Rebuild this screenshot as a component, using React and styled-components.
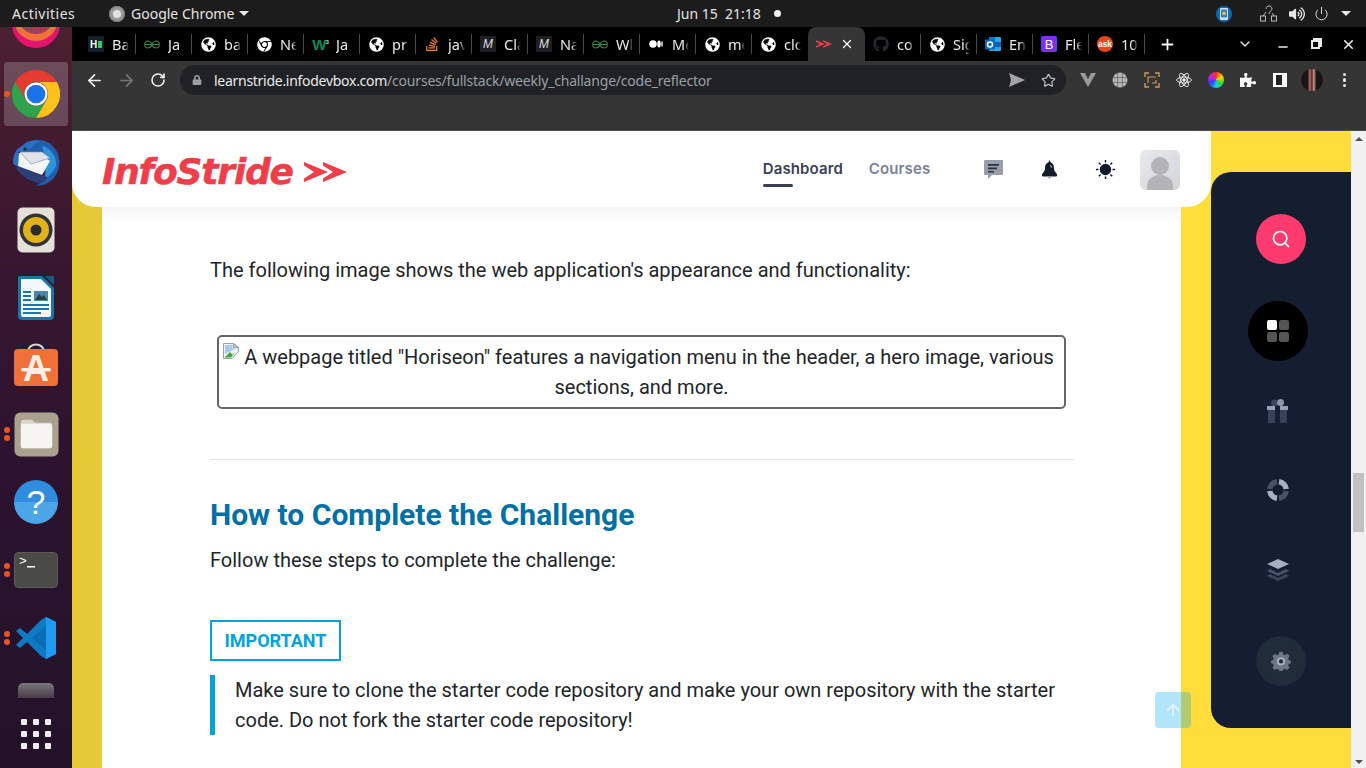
import styled, { createGlobalStyle } from 'styled-components'
import { ArrowLeft, ArrowRight, ArrowUp, RotateCw, Star, X, Plus, ChevronDown, Minus, Power, Search } from 'lucide-react'
import { FaGithub, FaStackOverflow, FaPuzzlePiece, FaGlobeAmericas, FaChrome, FaVolumeUp, FaLock } from 'react-icons/fa'

const GlobalStyle = createGlobalStyle`
  html, body {
    margin: 0;
    height: 100%;
    overflow: hidden;
    background: #1c1c1c;
  }
  * { box-sizing: border-box; }
`

const tabs = [
  { icon: 'hn', title: 'Ba' },
  { icon: 'gfg', title: 'Ja' },
  { icon: 'globe', title: 'ba' },
  { icon: 'chrome', title: 'Ne' },
  { icon: 'w3', title: 'Ja' },
  { icon: 'globe', title: 'pr' },
  { icon: 'so', title: 'jav' },
  { icon: 'medium', title: 'Cla' },
  { icon: 'medium', title: 'Na' },
  { icon: 'gfg', title: 'Wl' },
  { icon: 'dots', title: 'Me' },
  { icon: 'globe', title: 'me' },
  { icon: 'globe', title: 'clo', last: true },
  { icon: 'stride', active: true },
  { icon: 'github', title: 'co' },
  { icon: 'globe', title: 'Sig' },
  { icon: 'outlook', title: 'En' },
  { icon: 'bootstrap', title: 'Fle' },
  { icon: 'ask', title: '10' },
]

function Chevrons({ width = 16, color = '#ef3e4a' }) {
  return (
    <svg width={width} height={(width * 22) / 43} viewBox="0 0 43 22" fill={color}>
      <path d="M0 1L24 11L0 21V17.500L10 11L0 4.500Z" />
      <path d="M19 1L43 11L19 21V17.500L29 11L19 4.500Z" />
    </svg>
  )
}

function GfgIcon() {
  return (
    <svg width="16" height="9" viewBox="0 0 32 18" fill="none" stroke="#2f8d46" strokeWidth="2.200">
      <path d="M16 9C14 4 10 2 7 2 4 2 1.500 5 1.500 9s2.500 7 5.500 7c3 0 7-2 9-7zm0 0c2-5 6-7 9-7 3 0 5.500 3 5.500 7s-2.500 7-5.500 7c-3 0-7-2-9-7zM1.500 9h29" />
    </svg>
  )
}

function TabIcon({ name }) {
  if (name === 'globe') return <FaGlobeAmericas size={15} color="#fff" />
  if (name === 'chrome') return <FaChrome size={15} color="#fff" />
  if (name === 'so') return <FaStackOverflow size={16} color="#f48024" />
  if (name === 'github') return <FaGithub size={16} color="#24292f" />
  if (name === 'gfg') return <GfgIcon />
  if (name === 'stride') return <Chevrons />
  if (name === 'hn') return <HnBadge>H<i /></HnBadge>
  if (name === 'w3') return <W3Badge>W<sup>3</sup></W3Badge>
  if (name === 'medium') return <MediumBadge>M</MediumBadge>
  if (name === 'dots') {
    return (
      <svg width="14" height="8" viewBox="0 0 28 16" fill="#fff">
        <circle cx="8" cy="8" r="7.500" />
        <ellipse cx="20" cy="8" rx="3.500" ry="7" />
        <ellipse cx="26" cy="8" rx="1.500" ry="6" />
      </svg>
    )
  }
  if (name === 'outlook') {
    return (
      <svg width="16" height="16" viewBox="0 0 16 16">
        <rect x="4" y="1" width="12" height="14" rx="1" fill="#28a8ea" />
        <rect x="4" y="1" width="6" height="5" fill="#0078d4" />
        <rect x="10" y="6" width="6" height="5" fill="#0364b8" />
        <rect x="0" y="3.500" width="10" height="10" rx="1" fill="#0f6cbd" />
        <circle cx="5" cy="8.500" r="2.500" fill="none" stroke="#fff" strokeWidth="1.400" />
      </svg>
    )
  }
  if (name === 'bootstrap') return <BootstrapBadge>B</BootstrapBadge>
  if (name === 'ask') return <AskBadge>ask</AskBadge>
  return null
}

function ChromeLogo({ size = 48 }) {
  return (
    <svg width={size} height={size} viewBox="0 0 48 48">
      <path d="M3.200 12A24 24 0 0 1 44.800 12L24 12A12 12 0 0 0 13.600 30Z" fill="#e53b30" />
      <path d="M44.800 12A24 24 0 0 1 24 48L34.400 30A12 12 0 0 0 24 12Z" fill="#fcc11a" />
      <path d="M24 48A24 24 0 0 1 3.200 12L13.600 30A12 12 0 0 0 34.400 30Z" fill="#2fa24c" />
      <circle cx="24" cy="24" r="11.500" fill="#fff" />
      <circle cx="24" cy="24" r="9.300" fill="#1a73e8" />
    </svg>
  )
}

function Firefox() {
  return (
    <svg width="48" height="48" viewBox="0 0 48 48">
      <circle cx="24" cy="24" r="24" fill="#e2146e" />
      <circle cx="24" cy="19" r="22" fill="#f2703a" />
      <circle cx="24" cy="16" r="18" fill="#a63b55" />
      <circle cx="24" cy="14" r="12" fill="#5a2d72" />
    </svg>
  )
}

function Thunderbird() {
  return (
    <svg width="48" height="48" viewBox="0 0 48 48">
      <path d="M10 8C20-2 38 0 45 14c6 13 0 29-14 33l-8 1c9-4 11-10 9-17L6 22z" fill="#1f5fae" />
      <path d="M30 8c9 2 15 10 14 20-3 6-6 9-11 13 1-8 2-18-3-33z" fill="#2f93dc" />
      <path d="M1 24C1 16 5 10 10 8c6-6 14-6 19-4-5 0-8 3-9 6L6 14l10 10-8 5c-4-1-7-2-7-5z" fill="#2b6fc2" />
      <path d="M7 15l21 1 10 7-8 14-24-8z" fill="#f4f5f7" />
      <path d="M8 14l11 12 19-6-8-6z" fill="#dfe4ea" stroke="#8a97a8" strokeWidth=".7" />
      <path d="M4 30c5 8 14 14 24 15 5 0 7-4 7-6L6 28z" fill="#2c3f78" />
      <circle cx="13" cy="11" r="1.500" fill="#123" />
    </svg>
  )
}

function Rhythmbox() {
  return (
    <svg width="38" height="46" viewBox="0 0 38 46">
      <rect width="37" height="45" x=".5" y=".5" rx="5" fill="#e5e1d8" />
      <circle cx="19" cy="23" r="16.500" fill="#333" />
      <circle cx="19" cy="23" r="13" fill="#e0b21c" />
      <circle cx="19" cy="23" r="5.500" fill="#2b2b2b" />
    </svg>
  )
}

function Writer() {
  return (
    <svg width="38" height="46" viewBox="0 0 38 46">
      <path d="M3 1h22l12 12v28a4 4 0 0 1-4 4H5a4 4 0 0 1-4-4V3a2 2 0 0 1 2-2z" fill="#1a76a8" />
      <path d="M28 1h9v9z" fill="#145c85" />
      <path d="M4 4h20l10 10v26a2 2 0 0 1-2 2H6a2 2 0 0 1-2-2z" fill="#f4f7f9" />
      <rect x="17" y="16" width="14" height="10" fill="#4b87ad" />
      <path d="M18 25l4-6 3 3 2-2 3 5z" fill="#3a3a3a" />
      <g fill="#1a76a8">
        <rect x="6" y="16" width="8" height="2" />
        <rect x="6" y="20" width="8" height="2" />
        <rect x="6" y="24" width="8" height="2" />
        <rect x="6" y="29" width="26" height="2" />
        <rect x="6" y="33" width="26" height="2" />
        <rect x="6" y="37" width="18" height="2" />
      </g>
    </svg>
  )
}

function Software() {
  return (
    <svg width="46" height="46" viewBox="0 0 46 46">
      <path d="M15 9c0-10 16-10 16 0" fill="none" stroke="#e8d2b8" strokeWidth="2" />
      <rect x="1" y="6" width="44" height="37" rx="4" fill="#f0703a" />
      <text x="23" y="38" textAnchor="middle" fontFamily="Liberation Sans" fontWeight="700" fontSize="36" fill="#fbeee4">A</text>
      <rect x="8" y="25" width="30" height="3.500" rx="1.700" fill="#fbeee4" />
    </svg>
  )
}

function Files() {
  return (
    <svg width="45" height="45" viewBox="0 0 46 46">
      <rect x=".5" y=".5" width="45" height="45" rx="6" fill="#a9a28f" />
      <path d="M7 11a3 3 0 0 1 3-3h8l4 3h15a2 2 0 0 1 2 2v22a2 2 0 0 1-2 2H9a2 2 0 0 1-2-2z" fill="#d8d6cf" />
      <path d="M7 14a2 2 0 0 1 2-2h28a2 2 0 0 1 2 2v21a2 2 0 0 1-2 2H9a2 2 0 0 1-2-2z" fill="#f7f5f3" />
    </svg>
  )
}

function Terminal() {
  return (
    <svg width="44" height="36" viewBox="0 0 44 36">
      <rect width="43" height="35" x=".5" y=".5" rx="4" fill="#4a4a48" stroke="#5c5c5a" />
      <text x="5" y="13" fontFamily="Liberation Mono" fontSize="13" fill="#fff">&gt;</text>
      <rect x="13" y="14" width="8" height="1.500" fill="#fff" />
    </svg>
  )
}

function VsCode() {
  return (
    <svg width="44" height="44" viewBox="0 0 44 44">
      <path d="M32 1l10 5v32l-10 5-21-20z" fill="#0a6cb3" />
      <path d="M32 1l10 5v32l-10 5z" fill="#1f9cf0" />
      <path d="M2 15l4-3 26 22v9l-5-3z" fill="#0e7ac4" />
      <path d="M2 29l4 3 26-22V1l-5 3z" fill="#0e7ac4" />
    </svg>
  )
}

function Help() {
  return <HelpBall>?</HelpBall>
}

function ReactAtom() {
  return (
    <svg width="16" height="16" viewBox="0 0 24 24" fill="none" stroke="#dfe3e8" strokeWidth="1.500">
      <ellipse cx="12" cy="12" rx="11" ry="4.500" />
      <ellipse cx="12" cy="12" rx="11" ry="4.500" transform="rotate(60 12 12)" />
      <ellipse cx="12" cy="12" rx="11" ry="4.500" transform="rotate(120 12 12)" />
      <circle cx="12" cy="12" r="2" fill="#dfe3e8" />
    </svg>
  )
}

function Gift() {
  return (
    <svg width="22" height="24" viewBox="0 0 22 24">
      <circle cx="7.500" cy="4" r="3.500" fill="#3b4560" />
      <circle cx="13.500" cy="3.500" r="3.500" fill="#8d97ab" />
      <rect x="1" y="7" width="7" height="17" rx="1" fill="#3b4258" />
      <rect x="13" y="7" width="7" height="17" rx="1" fill="#3b4258" />
      <rect y="7" width="8" height="4" fill="#98a1b3" />
      <rect x="13" y="7" width="8" height="4" fill="#98a1b3" />
    </svg>
  )
}

function Ring() {
  return (
    <svg width="22" height="22" viewBox="0 0 22 22" fill="none" strokeWidth="5.500">
      <path d="M12 2.800A8.300 8.300 0 0 1 19.200 10" stroke="#a9b1c1" />
      <path d="M19.200 12A8.300 8.300 0 0 1 12 19.200" stroke="#4a5266" />
      <path d="M10 19.200A8.300 8.300 0 0 1 2.800 12" stroke="#a9b1c1" />
      <path d="M2.800 10A8.300 8.300 0 0 1 10 2.800" stroke="#4a5266" />
    </svg>
  )
}

function Layers() {
  return (
    <svg width="22" height="22" viewBox="0 0 22 22">
      <path d="M0 17l3-2 8 4 8-4 3 2-11 5z" fill="#3f465a" />
      <path d="M0 12l3-2 8 4 8-4 3 2-11 5z" fill="#4b5268" />
      <path d="M11 0l11 5-11 5L0 5z" fill="#a8afc0" />
    </svg>
  )
}

function Gear() {
  return (
    <svg width="20" height="20" viewBox="0 0 24 24">
      <path
        d="M10 1h4l.6 3 2.300 1 2.600-1.700 2.800 2.800L20.600 8.700l1 2.300 2.400.6v3l-2.400.6-1 2.300 1.700 2.600-2.800 2.800-2.600-1.700-2.300 1-.6 2.800h-4l-.6-2.800-2.300-1-2.600 1.700-2.800-2.800 1.700-2.600-1-2.300-2.400-.6v-3l2.400-.6 1-2.300L1.700 6.100l2.800-2.800 2.600 1.700 2.300-1z"
        fill="#6e7686"
      />
      <circle cx="12" cy="12.500" r="5" fill="#a8afc0" />
      <circle cx="12" cy="12.500" r="2.500" fill="#202c3a" />
    </svg>
  )
}

function BrokenImage() {
  return (
    <BrokenIcon width="16" height="16" viewBox="0 0 16 16">
      <path d="M.5.5h10l5 4v4L9 15.500H.5z" fill="#eef1f5" stroke="#9aa0a9" />
      <path d="M10.500.5v4h5z" fill="#c9ced6" stroke="#9aa0a9" />
      <path d="M2 2h7.500v3.500H13L2 11z" fill="#a9c7ef" />
      <path d="M1.500 14.500L7 9l2.500 2.500L12 9.500 8 14.500z" fill="#43a832" />
    </BrokenIcon>
  )
}

export default function App() {
  return (
    <Screen>
      <GlobalStyle />
      <TopBar>
        <TopLeft>
          <Activities>Activities</Activities>
          <AppMenu>
            <AppGlyph />
            Google Chrome
            <Caret />
          </AppMenu>
        </TopLeft>
        <Clock>
          Jun 15&nbsp;&nbsp;21:18
          <ClockDot />
        </Clock>
        <Tray>
          <TrayBadge>
            <svg width="8" height="12" viewBox="0 0 8 12">
              <rect width="8" height="12" rx="1" fill="#cfe3f5" />
              <rect x="1" y="1.500" width="6" height="8" fill="#3d7fb8" />
              <rect x="2.500" y="4" width="3" height="3" fill="#f0c24a" />
            </svg>
          </TrayBadge>
          <TraySlot $gap={28}>
            <svg width="17" height="17" viewBox="0 0 17 17" fill="none" stroke="#bbb" strokeWidth="1">
              <rect x=".5" y="11" width="5" height="5" />
              <rect x="11.500" y="11" width="5" height="5" />
              <path d="M3 11l3-4M14 11l-2-3M6 4c0-4 6-4 6 0 0 2-3 2-3 5" />
            </svg>
          </TraySlot>
          <TraySlot $gap={11}>
            <FaVolumeUp size={16} color="#e6e6e6" />
          </TraySlot>
          <TraySlot $gap={8}>
            <Power size={15} color="#e6e6e6" strokeWidth={1.500} />
          </TraySlot>
          <TraySlot $gap={5}>
            <Caret />
          </TraySlot>
        </Tray>
      </TopBar>

      <Desktop>
        <Dock>
          <DockSlot $height={35} $clip>
            <Firefox />
          </DockSlot>
          <DockSlot $active $dots={1}>
            <ChromeLogo />
          </DockSlot>
          <DockSlot>
            <Thunderbird />
          </DockSlot>
          <DockSlot>
            <Rhythmbox />
          </DockSlot>
          <DockSlot>
            <Writer />
          </DockSlot>
          <DockSlot>
            <Software />
          </DockSlot>
          <DockSlot $dots={2}>
            <Files />
          </DockSlot>
          <DockSlot>
            <Help />
          </DockSlot>
          <DockSlot $dots={2}>
            <Terminal />
          </DockSlot>
          <DockSlot $dots={2}>
            <VsCode />
          </DockSlot>
          <DockClipped>
            <DiskTop />
          </DockClipped>
          <AppGrid>
            {Array.from({ length: 9 }).map((_, i) => (
              <i key={i} />
            ))}
          </AppGrid>
        </Dock>

        <Browser>
          <TabStrip>
            {tabs.map((tab, i) => (
              <Tab key={i} $active={tab.active} $last={tab.last}>
                <TabIconBox>
                  <TabIcon name={tab.icon} />
                </TabIconBox>
                {tab.active ? <X size={14} color="#fff" strokeWidth={2.200} /> : <TabTitle>{tab.title}</TabTitle>}
              </Tab>
            ))}
            <NewTab>
              <Plus size={17} color="#fff" strokeWidth={2.500} />
            </NewTab>
            <WindowControls>
              <WinButton $width={42}>
                <ChevronDown size={16} color="#e8e8e8" />
              </WinButton>
              <WinButton $width={34}>
                <Minus size={14} color="#e8e8e8" strokeWidth={2.500} style={{ marginTop: 6 }} />
              </WinButton>
              <WinButton $width={30}>
                <RestoreIcon />
              </WinButton>
              <WinButton $width={36}>
                <X size={15} color="#e8e8e8" strokeWidth={2.500} />
              </WinButton>
            </WindowControls>
          </TabStrip>

          <Toolbar>
            <ToolButton>
              <ArrowLeft size={19} color="#eee" strokeWidth={2.200} />
            </ToolButton>
            <ToolButton>
              <ArrowRight size={19} color="#777" strokeWidth={2.200} />
            </ToolButton>
            <ToolButton>
              <RotateCw size={16} color="#eee" strokeWidth={2.400} />
            </ToolButton>
            <UrlPill>
              <FaLock size={10} color="#9aa0a6" />
              <UrlText>
                <b>learnstride.infodevbox.com</b>/courses/fullstack/weekly_challange/code_reflector
              </UrlText>
              <svg width="16" height="14" viewBox="0 0 16 14">
                <path d="M0 0l16 7-16 7 2-7z" fill="#a4a4a4" />
              </svg>
              <Star size={15} color="#bbb" strokeWidth={2} style={{ marginLeft: 16, marginRight: 10 }} />
            </UrlPill>
            <Extensions>
              <ToolButton>
                <svg width="16" height="14" viewBox="0 0 16 14">
                  <path d="M0 0h5l3 6 3-6h5L8 14z" fill="#9a9a9a" />
                </svg>
              </ToolButton>
              <ToolButton>
                <svg width="16" height="16" viewBox="0 0 16 16" fill="none" stroke="#666" strokeWidth=".7">
                  <circle cx="8" cy="8" r="7.500" fill="#b4b4b4" stroke="none" />
                  <path d="M1 5.500h14M1 10.500h14M5.500 1v14M10.500 1v14" />
                </svg>
              </ToolButton>
              <ToolButton>
                <svg width="16" height="16" viewBox="0 0 16 16" fill="none" stroke="#c99863" strokeWidth="1.400">
                  <path d="M1 5V1h4M11 1h4v4M15 11v4h-4M5 15H1v-4" />
                  <path d="M4 11V5h8M12 8v3H8" strokeWidth="1.200" />
                </svg>
              </ToolButton>
              <ToolButton>
                <ReactAtom />
              </ToolButton>
              <ToolButton>
                <ColorWheel />
              </ToolButton>
              <ToolButton>
                <FaPuzzlePiece size={16} color="#fff" />
              </ToolButton>
              <ToolButton>
                <SidePanelIcon />
              </ToolButton>
              <ToolButton>
                <ProfilePic />
              </ToolButton>
              <MenuDots>
                <i />
                <i />
                <i />
              </MenuDots>
            </Extensions>
          </Toolbar>

          <Viewport>
            <Page>
              <MainColumn>
                <Header>
                  <Logo>
                    <LogoText>InfoStride</LogoText>
                    <Chevrons width={43} />
                  </Logo>
                  <Nav>
                    <NavLink $active>Dashboard</NavLink>
                    <NavLink>Courses</NavLink>
                  </Nav>
                  <HeaderIcons>
                    <HeaderIcon>
                      <svg width="19" height="19" viewBox="0 0 19 19">
                        <path d="M1 0h17a1 1 0 0 1 1 1v13a1 1 0 0 1-1 1H8l-4 4v-4H1a1 1 0 0 1-1-1V1a1 1 0 0 1 1-1z" fill="#9a9ea8" />
                        <rect x="4" y="4" width="11" height="1.800" fill="#2b3245" />
                        <rect x="4" y="7.500" width="9" height="1.800" fill="#2b3245" />
                        <rect x="4" y="11" width="6" height="1.500" fill="#2b3245" />
                      </svg>
                    </HeaderIcon>
                    <HeaderIcon>
                      <svg width="15" height="19" viewBox="0 0 15 19">
                        <path d="M7.500 0l1.200 2.500C12 3.500 12 7 12 9c0 2.500 3 4 3 6H0c0-2 3-3.500 3-6 0-2 0-5.500 3.300-6.500z" fill="#141a2e" />
                        <rect y="14" width="15" height="2.500" rx="1.200" fill="#141a2e" />
                        <path d="M5 16.500h5L7.500 19z" fill="#a6a9b3" />
                        <path d="M8.500 5.500l1.200 2" stroke="#fff" strokeWidth="1" />
                      </svg>
                    </HeaderIcon>
                    <HeaderIcon>
                      <svg width="19" height="19" viewBox="0 0 19 19" stroke="#141a2e" strokeWidth="1.400">
                        <circle cx="9.500" cy="9.500" r="5" fill="#141a2e" />
                        <path d="M9.500 0v2.500M9.500 16.500V19M0 9.500h2.500M16.500 9.500H19M2.800 2.800l1.800 1.800M14.400 14.400l1.800 1.800M2.800 16.200l1.800-1.800M14.400 4.600l1.800-1.800" />
                      </svg>
                    </HeaderIcon>
                  </HeaderIcons>
                  <Avatar>
                    <svg width="40" height="40" viewBox="0 0 40 40">
                      <circle cx="20" cy="16" r="9" fill="#b4b4b6" />
                      <path d="M7 40V36c0-7 6-11 13-11s13 4 13 11v4z" fill="#b4b4b6" />
                    </svg>
                  </Avatar>
                </Header>

                <Content>
                  <Paragraph>The following image shows the web application's appearance and functionality:</Paragraph>
                  <ImageFrame>
                    <BrokenImage />A webpage titled "Horiseon" features a navigation menu in the header, a hero image, various sections, and more.
                  </ImageFrame>
                  <Divider />
                  <Heading>How to Complete the Challenge</Heading>
                  <Paragraph>Follow these steps to complete the challenge:</Paragraph>
                  <NoticeLabel>IMPORTANT</NoticeLabel>
                  <NoticeBody>
                    Make sure to clone the starter code repository and make your own repository with the starter code. Do not fork the starter code repository!
                  </NoticeBody>
                </Content>
              </MainColumn>

              <SidePanel>
                <SearchButton>
                  <Search size={20} color="#fff" strokeWidth={2} />
                </SearchButton>
                <PanelNav>
                  <PanelItem $current>
                    <GridIcon>
                      <i />
                      <i />
                      <i />
                      <i />
                    </GridIcon>
                  </PanelItem>
                  <PanelItem>
                    <Gift />
                  </PanelItem>
                  <PanelItem>
                    <Ring />
                  </PanelItem>
                  <PanelItem>
                    <Layers />
                  </PanelItem>
                </PanelNav>
                <SettingsButton>
                  <Gear />
                </SettingsButton>
              </SidePanel>
            </Page>

            <Scrollbar>
              <ScrollArrow $dir="up" />
              <ScrollThumb />
              <ScrollArrow $dir="down" />
            </Scrollbar>

            <BackToTop>
              <ArrowUp size={18} color="#fff" strokeWidth={2.500} />
            </BackToTop>
          </Viewport>
        </Browser>
      </Desktop>
    </Screen>
  )
}

const Screen = styled.div`
  width: 1366px;
  height: 768px;
  display: flex;
  flex-direction: column;
  overflow: hidden;
  font-family: 'Roboto', sans-serif;
`

const TopBar = styled.header`
  height: 27px;
  flex: none;
  display: grid;
  grid-template-columns: 677px 1fr auto;
  align-items: center;
  background: #1c1c1c;
  color: #e4e4e4;
  font-family: 'Noto Sans', sans-serif;
  font-size: 14px;
`

const TopLeft = styled.div`
  display: flex;
  align-items: center;
  padding-left: 12px;
`

const Activities = styled.span`
  width: 97px;
  letter-spacing: 0.5px;
`

const AppMenu = styled.span`
  display: flex;
  align-items: center;
`

const AppGlyph = styled.i`
  width: 16px;
  height: 16px;
  margin-right: 6px;
  border-radius: 50%;
  border: 4px solid #9a9a9a;
  background: #e2e2e2;
  outline: 1px solid #777;
  outline-offset: -1px;
`

const Caret = styled.i`
  width: 0;
  height: 0;
  margin-left: 5px;
  border-left: 5px solid transparent;
  border-right: 5px solid transparent;
  border-top: 5px solid #e8e8e8;
`

const Clock = styled.div`
  display: flex;
  align-items: center;
  font-size: 14px;
`

const ClockDot = styled.i`
  width: 7px;
  height: 7px;
  margin-left: 13px;
  border-radius: 50%;
  background: #f0f0f0;
`

const Tray = styled.div`
  display: flex;
  align-items: center;
  padding-right: 14px;
`

const TrayBadge = styled.span`
  width: 16px;
  height: 16px;
  display: flex;
  align-items: center;
  justify-content: center;
  border-radius: 50%;
  background: #1268b3;
`

const TraySlot = styled.span`
  display: flex;
  align-items: center;
  justify-content: center;
  min-width: 17px;
  margin-left: ${p => p.$gap}px;
`

const Desktop = styled.div`
  flex: 1;
  min-height: 0;
  display: flex;
`

const Dock = styled.aside`
  width: 72px;
  flex: none;
  display: flex;
  flex-direction: column;
  align-items: center;
  background: linear-gradient(180deg, #4c2030 0%, #38172f 30%, #2c1330 60%, #24122a 100%);
`

const DockSlot = styled.div`
  position: relative;
  width: 64px;
  height: ${p => p.$height || 68}px;
  flex: none;
  display: flex;
  align-items: ${p => (p.$clip ? 'flex-start' : 'center')};
  justify-content: center;
  overflow: ${p => (p.$clip ? 'hidden' : 'visible')};
  border-radius: 3px;
  ${p => p.$clip && 'svg { margin-top: -27px; }'}
  ${p => p.$active && 'height: 64px; margin: 0 0 2px; background: rgba(255, 255, 255, 0.2);'}
  ${p =>
    p.$dots &&
    `&::before {
      content: '';
      position: absolute;
      left: 0;
      top: 50%;
      width: 6px;
      height: 6px;
      margin-top: ${p.$dots === 2 ? -7 : -3}px;
      border-radius: 50%;
      background: #e95420;
      ${p.$dots === 2 ? 'box-shadow: 0 8px 0 #e95420;' : ''}
    }`}
`

const DockClipped = styled.div`
  width: 64px;
  height: 26px;
  flex: none;
  display: flex;
  align-items: flex-end;
  justify-content: center;
`

const DiskTop = styled.div`
  width: 36px;
  height: 15px;
  border-radius: 5px 5px 0 0;
  background: linear-gradient(180deg, #777 0%, #4a3c4a 100%);
`

const AppGrid = styled.div`
  display: grid;
  grid-template-columns: repeat(3, 6px);
  gap: 6px;
  margin-top: 21px;

  i {
    width: 6px;
    height: 6px;
    border-radius: 1px;
    background: #eee;
  }
`

const HelpBall = styled.div`
  width: 44px;
  height: 44px;
  display: flex;
  align-items: center;
  justify-content: center;
  border-radius: 50%;
  background: linear-gradient(180deg, #2e8ddf 0 50%, #4ba6e8 50% 100%);
  color: #fff;
  font-family: 'Liberation Sans', sans-serif;
  font-size: 34px;
`

const Browser = styled.main`
  flex: 1;
  min-width: 0;
  display: flex;
  flex-direction: column;
`

const TabStrip = styled.div`
  height: 34px;
  flex: none;
  display: flex;
  padding-left: 8px;
  background: #000;
`

const Tab = styled.div`
  position: relative;
  width: 56px;
  display: flex;
  align-items: center;
  padding-left: 8px;
  color: #e8eaed;
  font-family: 'Noto Sans', sans-serif;
  font-size: 14.500px;
  ${p => p.$active && 'background: #353535; border-radius: 8px 8px 0 0; width: 57px;'}
  ${p =>
    !p.$active &&
    !p.$last &&
    `&::after {
      content: '';
      position: absolute;
      right: 0;
      top: 7px;
      bottom: 7px;
      width: 1px;
      background: #4a4a4a;
    }`}
`

const TabIconBox = styled.span`
  width: 16px;
  height: 16px;
  flex: none;
  margin-right: 8px;
  display: flex;
  align-items: center;
  justify-content: center;
`

const TabTitle = styled.span`
  width: 17px;
  overflow: hidden;
  white-space: nowrap;
  -webkit-mask-image: linear-gradient(90deg, #000 70%, transparent 100%);
  mask-image: linear-gradient(90deg, #000 70%, transparent 100%);
`

const HnBadge = styled.span`
  width: 16px;
  height: 16px;
  display: flex;
  align-items: center;
  justify-content: center;
  gap: 1px;
  background: #12202a;
  color: #fff;
  font-family: 'Liberation Sans', sans-serif;
  font-size: 10px;
  font-weight: 700;

  i {
    width: 4px;
    height: 7px;
    background: #25d56a;
  }
`

const W3Badge = styled.span`
  color: #0a8a5c;
  font-family: 'Liberation Sans', sans-serif;
  font-size: 15px;
  font-weight: 700;
  letter-spacing: -1px;
  white-space: nowrap;

  sup {
    font-size: 6px;
    color: #ccc;
  }
`

const MediumBadge = styled.span`
  width: 16px;
  height: 16px;
  display: flex;
  align-items: center;
  justify-content: center;
  background: #1e1e24;
  color: #ddd;
  font-family: 'Liberation Sans', sans-serif;
  font-size: 12px;
  font-style: italic;
`

const BootstrapBadge = styled.span`
  width: 16px;
  height: 16px;
  display: flex;
  align-items: center;
  justify-content: center;
  border-radius: 2px;
  background: #7b2ff0;
  color: #fff;
  font-family: 'Liberation Sans', sans-serif;
  font-size: 13px;
`

const AskBadge = styled.span`
  width: 16px;
  height: 16px;
  display: flex;
  align-items: center;
  justify-content: center;
  border-radius: 50%;
  background: #e8481c;
  color: #fff;
  font-family: 'Liberation Sans', sans-serif;
  font-size: 8.500px;
  font-weight: 700;
`

const NewTab = styled.span`
  width: 44px;
  display: flex;
  align-items: center;
  justify-content: center;
`

const WindowControls = styled.div`
  display: flex;
  margin-left: auto;
`

const WinButton = styled.span`
  width: ${p => p.$width}px;
  display: flex;
  align-items: center;
  justify-content: center;
`

const RestoreIcon = styled.i`
  position: relative;
  width: 9px;
  height: 9px;
  border: 2px solid #e8e8e8;
  box-shadow: 2px -2px 0 0 #e8e8e8;
`

const Toolbar = styled.div`
  height: 70px;
  flex: none;
  display: flex;
  align-items: flex-start;
  padding: 4px 0 0 6px;
  background: #353535;
  border-bottom: 1px solid #4a4a4a;
`

const ToolButton = styled.span`
  width: 32px;
  height: 30px;
  flex: none;
  display: flex;
  align-items: center;
  justify-content: center;
`

const UrlPill = styled.div`
  width: 886px;
  height: 30px;
  flex: none;
  margin-left: 6px;
  display: flex;
  align-items: center;
  padding: 0 0 0 12px;
  border-radius: 15px;
  background: #202124;
`

const UrlText = styled.span`
  flex: 1;
  margin-left: 12px;
  color: #9aa0a6;
  font-family: 'Noto Sans', sans-serif;
  font-size: 14px;
  letter-spacing: -0.2px;
  white-space: nowrap;

  b {
    font-weight: 400;
    letter-spacing: -0.28px;
    color: #e8eaed;
  }
`

const Extensions = styled.div`
  display: flex;
  margin-left: 6px;
`

const ColorWheel = styled.i`
  width: 16px;
  height: 16px;
  border-radius: 50%;
  background: conic-gradient(#ff2a2a, #ffd400, #2bd92b, #14c8e6, #2a3cff, #c81ee6, #ff2a2a);
`

const SidePanelIcon = styled.i`
  width: 14px;
  height: 14px;
  border: 2px solid #fff;
  border-left-width: 3px;
  border-right: 5px solid #fff;
  background: #222;
`

const ProfilePic = styled.i`
  width: 22px;
  height: 22px;
  border-radius: 50%;
  background: linear-gradient(90deg, #1a1412 0 30%, #a87468 40%, #5a2020 50%, #c8988a 58%, #1a1412 70%);
`

const MenuDots = styled.span`
  width: 33px;
  height: 30px;
  display: flex;
  flex-direction: column;
  align-items: center;
  justify-content: center;
  gap: 2px;

  i {
    width: 3.500px;
    height: 3.500px;
    border-radius: 50%;
    background: #e8e8e8;
  }
`

const Viewport = styled.div`
  position: relative;
  flex: 1;
  min-height: 0;
  display: flex;
`

const Page = styled.div`
  flex: 1;
  min-width: 0;
  display: flex;
  overflow: hidden;
  background: linear-gradient(90deg, #e6c937 0%, #f2d338 50%, #ffdd3b 88%);
`

const MainColumn = styled.div`
  width: 1139px;
  flex: none;
  display: flex;
  flex-direction: column;
`

const Header = styled.div`
  height: 76px;
  flex: none;
  display: flex;
  align-items: center;
  padding: 0 30px;
  background: #fff;
  border-radius: 0 0 24px 24px;
  position: relative;
  z-index: 1;
`

const Logo = styled.div`
  display: flex;
  align-items: center;
  gap: 11px;
  margin-top: 5px;
`

const LogoText = styled.span`
  color: #ef3e4a;
  font-family: 'DejaVu Sans', sans-serif;
  font-size: 36px;
  font-style: italic;
  font-weight: 700;
  letter-spacing: -1.200px;
  line-height: 40px;
  -webkit-text-stroke: 0.5px #ef3e4a;
`

const Nav = styled.nav`
  display: flex;
  gap: 26px;
  margin-left: 416px;
  align-self: flex-start;
  margin-top: 27px;
`

const NavLink = styled.a`
  display: flex;
  flex-direction: column;
  color: ${p => (p.$active ? '#3a3f55' : '#7b8199')};
  font-family: 'Inter', sans-serif;
  font-size: 15px;
  font-weight: 600;
  letter-spacing: 0.1px;
  line-height: 22px;

  &::after {
    content: '';
    width: 30px;
    height: 3px;
    margin-top: 4px;
    border-radius: 2px;
    background: ${p => (p.$active ? '#3a3f55' : 'transparent')};
  }
`

const HeaderIcons = styled.div`
  display: flex;
  align-items: center;
  margin-left: 35px;
`

const HeaderIcon = styled.span`
  width: 56px;
  height: 30px;
  display: flex;
  align-items: center;
  justify-content: center;
`

const Avatar = styled.div`
  width: 40px;
  height: 40px;
  margin-left: 7px;
  margin-top: 2px;
  border-radius: 6px;
  overflow: hidden;
  background: linear-gradient(135deg, #e8e9eb, #d3d4d7);
`

const Content = styled.article`
  flex: 1;
  margin: 0 30px;
  padding: 48px 107px 0 108px;
  background: linear-gradient(180deg, #f5f5f7 0, #fff 16px);
  color: #212529;
  font-size: 20px;
  line-height: 30px;
`

const Paragraph = styled.p`
  margin: 0;
`

const ImageFrame = styled.div`
  width: 849px;
  margin: 50px 0 0 7px;
  padding: 5px 4px;
  border: 2px solid #666;
  border-radius: 5px;
  text-align: center;
`

const BrokenIcon = styled.svg`
  vertical-align: top;
  margin: 1px 5px 0 -6px;
`

const Divider = styled.hr`
  height: 1px;
  margin: 50px 0 0;
  border: 0;
  background: #e4e4e4;
`

const Heading = styled.h2`
  margin: 35px 0 10px;
  color: #0070a8;
  font-size: 30px;
  font-weight: 700;
  line-height: 40px;
`

const NoticeLabel = styled.div`
  width: 131px;
  height: 41px;
  margin-top: 45px;
  display: flex;
  align-items: center;
  justify-content: center;
  border: 2px solid #00a3e0;
  color: #00a3e0;
  font-size: 18px;
  font-weight: 700;
`

const NoticeBody = styled.blockquote`
  margin: 14px 0 0;
  padding-left: 20px;
  border-left: 5px solid #00a3e0;
`

const SidePanel = styled.aside`
  flex: 1;
  height: 556px;
  margin-top: 41px;
  display: flex;
  flex-direction: column;
  align-items: center;
  padding-top: 42px;
  border-radius: 20px 0 0 20px;
  background: #141e30;
`

const SearchButton = styled.span`
  width: 50px;
  height: 50px;
  flex: none;
  display: flex;
  align-items: center;
  justify-content: center;
  border-radius: 50%;
  background: #ff3a6e;
`

const PanelNav = styled.div`
  display: flex;
  flex-direction: column;
  gap: 19.500px;
  margin: 37px 6px 0 0;
`

const PanelItem = styled.span`
  width: 60px;
  height: 60px;
  display: flex;
  align-items: center;
  justify-content: center;
  border-radius: 50%;
  background: ${p => (p.$current ? '#000' : 'transparent')};
`

const GridIcon = styled.span`
  display: grid;
  grid-template-columns: repeat(2, 10px);
  gap: 2px;

  i {
    height: 10px;
    border-radius: 2px;
    background: #555;
  }

  i:first-child {
    background: #fff;
  }
`

const SettingsButton = styled.span`
  width: 50px;
  height: 50px;
  margin-top: 36px;
  display: flex;
  align-items: center;
  justify-content: center;
  border-radius: 50%;
  background: #202c3a;
`

const Scrollbar = styled.div`
  width: 15px;
  flex: none;
  display: flex;
  flex-direction: column;
  align-items: center;
  background: #f1f1f1;
  padding: 6px 0 4px;
`

const ScrollArrow = styled.i`
  width: 0;
  height: 0;
  border-left: 4px solid transparent;
  border-right: 4px solid transparent;
  ${p => (p.$dir === 'up' ? 'border-bottom: 4px solid #505050;' : 'border-top: 4px solid #505050; margin-top: auto;')}
`

const ScrollThumb = styled.i`
  width: 11px;
  height: 59px;
  margin-top: 332px;
  background: #c1c1c1;
`

const BackToTop = styled.span`
  position: absolute;
  left: 1083px;
  bottom: 40px;
  width: 36px;
  height: 36px;
  display: flex;
  align-items: center;
  justify-content: center;
  border-radius: 4px;
  background: rgba(0, 165, 240, 0.3);
  z-index: 2;

  svg {
    opacity: 0.6;
  }
`
